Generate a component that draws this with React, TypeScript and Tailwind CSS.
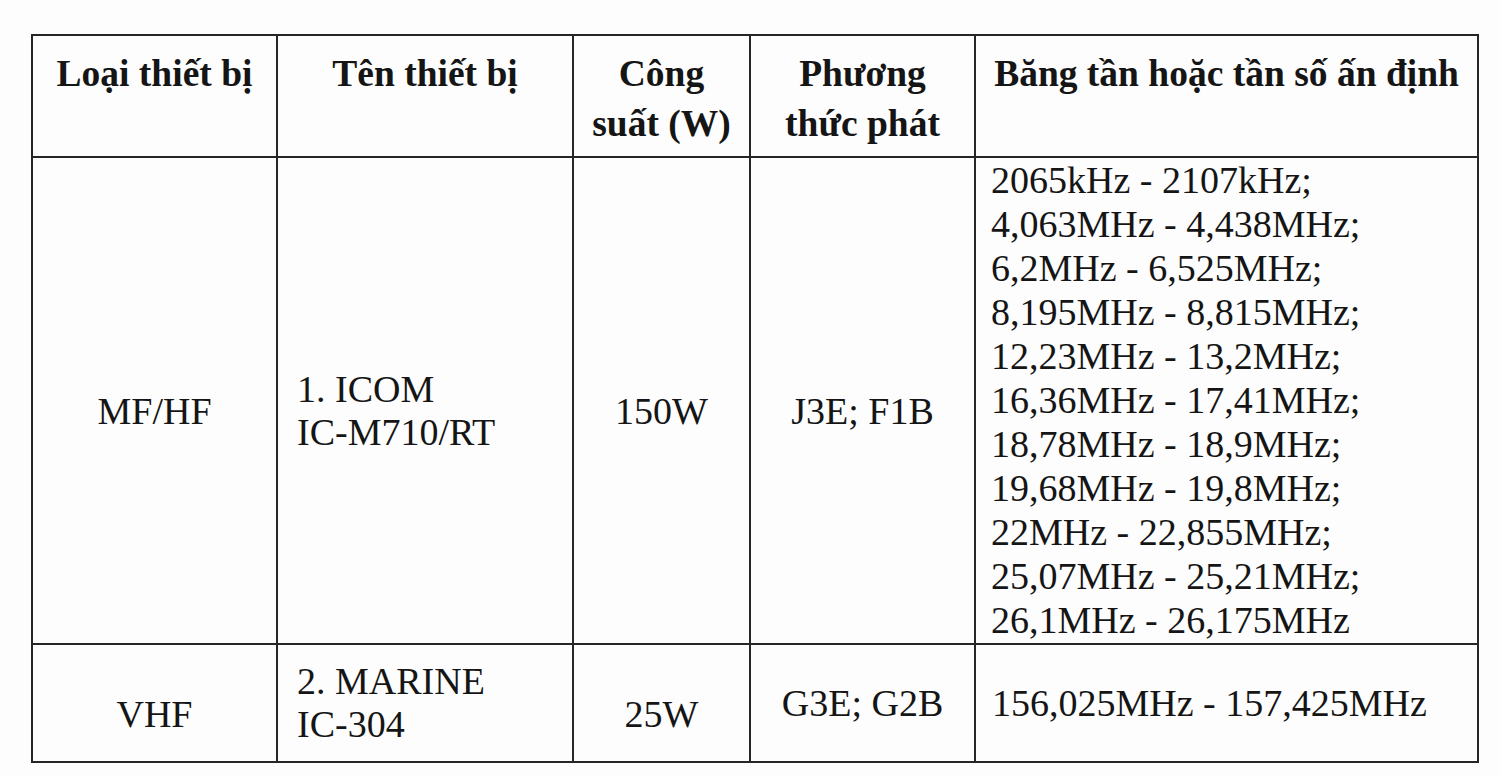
const serif = 'font-["Liberation_Serif","Times_New_Roman",serif]';

const frequencies = [
  '2065kHz - 2107kHz;',
  '4,063MHz - 4,438MHz;',
  '6,2MHz - 6,525MHz;',
  '8,195MHz - 8,815MHz;',
  '12,23MHz - 13,2MHz;',
  '16,36MHz - 17,41MHz;',
  '18,78MHz - 18,9MHz;',
  '19,68MHz - 19,8MHz;',
  '22MHz - 22,855MHz;',
  '25,07MHz - 25,21MHz;',
  '26,1MHz - 26,175MHz',
];

const HeaderCell = ({ children }: { children: React.ReactNode }) => (
  <div className="bg-[#fdfdfd] pt-[13px] text-center text-[37.5px] font-bold leading-[50px]">
    {children}
  </div>
);

const App = () => {
  return (
    <div className={`min-h-screen w-full bg-[#fdfdfd] pl-[31px] pt-[34px] text-[#151515] ${serif}`}>
      <div className="grid w-[1448px] grid-cols-[243px_294px_175px_223px_501px] grid-rows-[120px_485px_116px] gap-[2px] bg-[#262626] p-[2px]">
        {/* header */}
        <HeaderCell>Loại thiết bị</HeaderCell>
        <HeaderCell>Tên thiết bị</HeaderCell>
        <HeaderCell>
          Công
          <br />
          suất (W)
        </HeaderCell>
        <HeaderCell>
          Phương
          <br />
          thức phát
        </HeaderCell>
        <HeaderCell>Băng tần hoặc tần số ấn định</HeaderCell>

        {/* MF/HF row */}
        <div className="flex items-center justify-center bg-[#fdfdfd] pt-[21px] text-[38px] leading-[44px]">
          MF/HF
        </div>
        <div className="flex flex-col justify-center bg-[#fdfdfd] pl-[19px] pt-[21px] text-[38px] leading-[43px]">
          <span>1. ICOM</span>
          <span>IC-M710/RT</span>
        </div>
        <div className="flex items-center justify-center bg-[#fdfdfd] pt-[21px] text-[38px] leading-[44px]">
          150W
        </div>
        <div className="flex items-center justify-center bg-[#fdfdfd] pt-[21px] text-[38px] leading-[44px]">
          J3E; F1B
        </div>
        <div className="flex flex-col bg-[#fdfdfd] pl-[15px] text-[38px] leading-[44px]">
          {frequencies.map((f) => (
            <span key={f}>{f}</span>
          ))}
        </div>

        {/* VHF row */}
        <div className="flex items-center justify-center bg-[#fdfdfd] pt-[22px] text-[38px] leading-[44px]">
          VHF
        </div>
        <div className="flex flex-col justify-center bg-[#fdfdfd] pl-[19px] text-[38px] leading-[43px]">
          <span>2. MARINE</span>
          <span>IC-304</span>
        </div>
        <div className="flex items-center justify-center bg-[#fdfdfd] pt-[22px] text-[38px] leading-[44px]">
          25W
        </div>
        <div className="flex items-center justify-center bg-[#fdfdfd] text-[38px] leading-[44px]">
          G3E; G2B
        </div>
        <div className="flex items-center bg-[#fdfdfd] pl-[16px] text-[38px] leading-[44px]">
          156,025MHz - 157,425MHz
        </div>
      </div>
    </div>
  );
};

export default App;
